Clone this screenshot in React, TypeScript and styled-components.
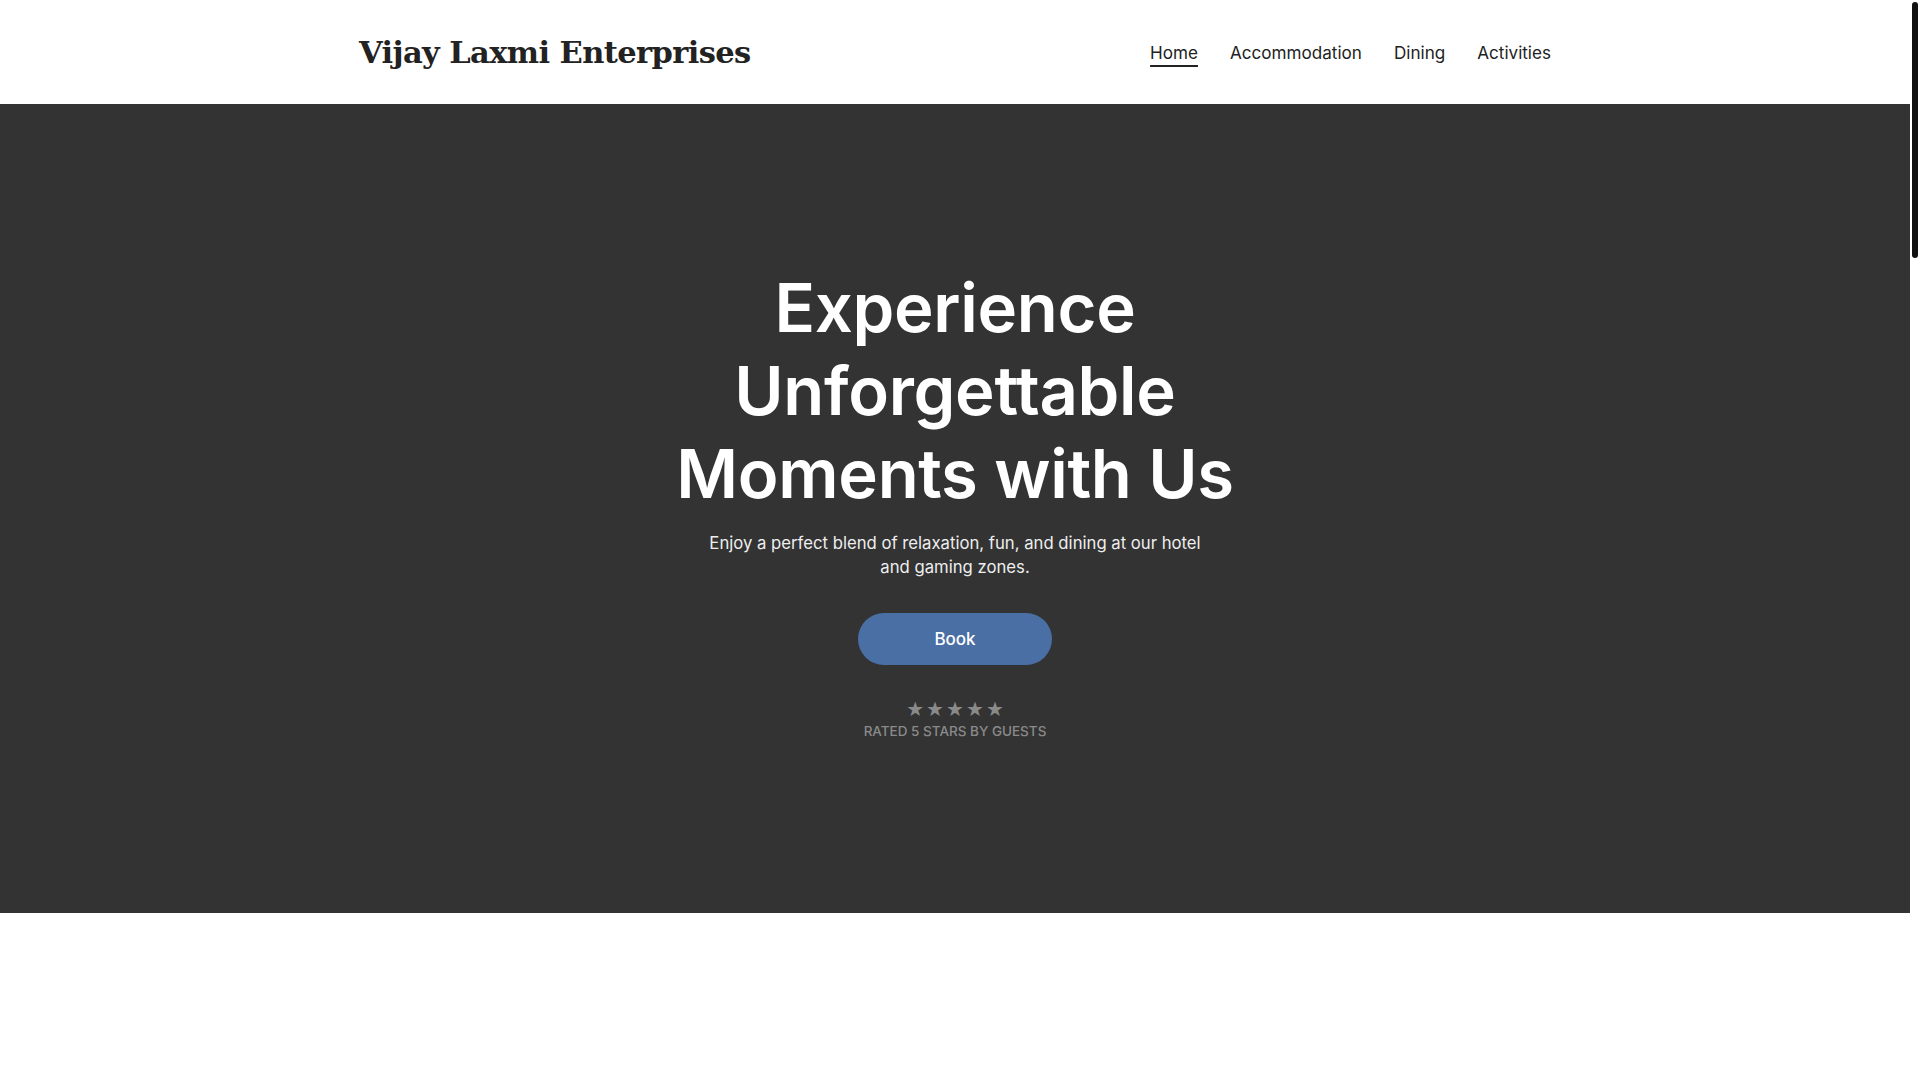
import * as React from 'react';
import styled, { createGlobalStyle } from 'styled-components';

const GlobalStyle = createGlobalStyle`
    html, body {
        margin: 0;
        padding: 0;
        background: #fff;
    }
    body {
        font-family: Inter, "Noto Sans", sans-serif;
        color: #222;
    }
    * {
        box-sizing: border-box;
    }
`;

// leaves room at the right for the thin page scrollbar
const Page = styled.div`
    margin-right: 10px;
`;

const ScrollThumb = styled.div`
    position: fixed;
    top: 2px;
    right: 2px;
    width: 6px;
    height: 256px;
    border-radius: 3px;
    background: #111;
`;

const Header = styled.header`
    height: 104px;
    background: #fff;
`;

const HeaderInner = styled.div`
    max-width: 1192px;
    height: 100%;
    margin: 0 auto;
    display: flex;
    align-items: center;
    justify-content: space-between;
`;

const Logo = styled.a`
    font-family: "DejaVu Serif", "Liberation Serif", serif;
    font-weight: 700;
    font-size: 30.5px;
    letter-spacing: -0.6px;
    color: #222;
    text-decoration: none;
`;

const Nav = styled.nav`
    display: flex;
    gap: 32px;
`;

interface NavLinkProps {
    readonly $active?: boolean;
}

const NavLink = styled.a<NavLinkProps>`
    font-size: 17.1px;
    color: #222;
    text-decoration: ${(props) => props.$active ? 'underline' : 'none'};
    text-decoration-thickness: 2px;
    text-underline-offset: 6px;
`;

const Hero = styled.section`
    height: 809px;
    background: #333;
    display: flex;
    flex-direction: column;
    align-items: center;
    justify-content: center;
    text-align: center;
    padding-bottom: 10px;
`;

const Title = styled.h1`
    margin: 0;
    max-width: 620px;
    font-size: 67px;
    line-height: 83px;
    font-weight: 600;
    color: #fff;
    letter-spacing: -0.3px;
`;

const Subtitle = styled.p`
    margin: 16px 0 0;
    max-width: 520px;
    font-size: 16.7px;
    line-height: 24px;
    color: #eee;
`;

const BookButton = styled.button`
    margin-top: 34px;
    width: 194px;
    height: 52px;
    border: none;
    border-radius: 26px;
    background: #4a6fa5;
    color: #fff;
    font-family: inherit;
    font-size: 17px;
    font-weight: 500;
    cursor: pointer;
`;

const Rating = styled.div`
    margin-top: 34px;
    display: flex;
    flex-direction: column;
    align-items: center;
    gap: 2px;
`;

const Stars = styled.div`
    display: flex;
    gap: 2px;
    color: #8a8a8a;
    font-family: "DejaVu Sans", sans-serif;
    font-size: 20px;
    line-height: 20px;
`;

const RatingText = styled.div`
    font-size: 13.5px;
    font-weight: 500;
    line-height: 20px;
    color: #8a8a8a;
    text-transform: uppercase;
`;

const Below = styled.section`
    height: 3600px;
    background: #fff;
`;

const links = ['Home', 'Accommodation', 'Dining', 'Activities'];

export default function App() {
    return (
        <Page>
            <GlobalStyle />
            <Header>
                <HeaderInner>
                    <Logo href="#">Vijay Laxmi Enterprises</Logo>
                    <Nav>
                        {links.map((l, i) => (
                            <NavLink key={l} href="#" $active={i === 0}>{l}</NavLink>
                        ))}
                    </Nav>
                </HeaderInner>
            </Header>
            <Hero>
                <Title>Experience Unforgettable Moments with Us</Title>
                <Subtitle>
                    Enjoy a perfect blend of relaxation, fun, and dining at our hotel and gaming zones.
                </Subtitle>
                <BookButton>Book</BookButton>
                <Rating>
                    <Stars>
                        <span>★</span><span>★</span><span>★</span><span>★</span><span>★</span>
                    </Stars>
                    <RatingText>Rated 5 stars by guests</RatingText>
                </Rating>
            </Hero>
            <Below />
            <ScrollThumb />
        </Page>
    );
}
